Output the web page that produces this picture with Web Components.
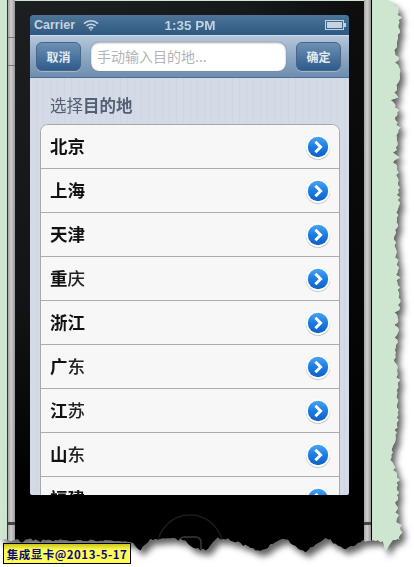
<!DOCTYPE html>
<html lang="zh"><head><meta charset="utf-8"><title>选择目的地</title>
<style>
html,body{margin:0;padding:0;background:#fff;width:414px;height:567px;overflow:hidden}
body{font-family:"Liberation Sans","Noto Sans CJK SC",sans-serif}
</style></head><body>
<torn-sheet>
  <phone-body>
    <ios-screen>
      <status-bar></status-bar>
      <search-bar>
        <nav-button>取消</nav-button>
        <text-box>手动输入目的地...</text-box>
        <nav-button>确定</nav-button>
      </search-bar>
      <grouped-list>
        <span slot="title">选择<b>目的地</b></span>
        <city-row><b>北京</b></city-row>
        <city-row><b>上海</b></city-row>
        <city-row><b>天津</b></city-row>
        <city-row><b>重</b><i>庆</i></city-row>
        <city-row><b>浙江</b></city-row>
        <city-row><b>广</b><i>东</i></city-row>
        <city-row><b>江</b><i>苏</i></city-row>
        <city-row><b>山</b><i>东</i></city-row>
        <city-row><b>福建</b></city-row>
      </grouped-list>
    </ios-screen>
  </phone-body>
</torn-sheet>
<stamp-label>集成显卡@2013-5-17</stamp-label>
<script>
function def(name,html){
  customElements.define(name,class extends HTMLElement{
    constructor(){super();this.attachShadow({mode:'open'}).innerHTML=html;}
  });
}
def('torn-sheet',`<style>
:host{display:block;width:414px;height:567px;filter:drop-shadow(4px 5px 3px rgba(60,60,60,.8))}
.page{display:flex;width:414px;height:567px;background:#cee6cf;overflow:hidden}
.green{width:7px;background:#cee6cf}
.line{width:1px;background:#2b3a2e}
.rail{width:7px;background:linear-gradient(90deg,#a5a5a5,#cfcfcf 45%,#989898);position:relative}
.rail i{position:absolute;left:0;right:0;height:3px;background:#444}
.rest{flex:1;background:#cee6cf}
</style><div class="page" id="p"><div class="green"></div><div class="line"></div>
<div class="rail"><i style="top:37px;height:1px;background:#777"></i><i style="top:65px;height:1px;background:#777"></i><i style="top:522px"></i></div>
<slot></slot>
<div class="rail"><i style="top:522px"></i></div><div class="line" style="background:#000"></div><div class="rest"></div></div>`);
def('phone-body',`<style>
:host{display:block;box-sizing:border-box;width:349px;height:567px;margin-top:1px;padding:14px 15px 0;
background:#000;position:relative}
:host::before{content:"";position:absolute;left:0;top:0;height:490px;width:15px;background:linear-gradient(180deg,#1d1e20,#131415 300px,#000)}
:host::after{content:"";position:absolute;right:0;top:0;height:490px;width:15px;background:linear-gradient(180deg,#0e0e0f,#060606 300px,#000)}
.band{position:absolute;left:15px;right:15px;top:0;height:14px;background:linear-gradient(90deg,#1d1e20,#17181a 70%,#0e0e0f)}
svg{position:absolute;left:100px;top:505px;z-index:1}
</style><div class="band"></div><slot></slot><svg width="150" height="70" viewBox="0 0 150 70" fill="none">
<circle cx="75" cy="42" r="33" stroke="#1c1c1c" stroke-width="1.5"/>
<rect x="64" y="31" width="22" height="22" rx="5" stroke="#3a3a3a" stroke-width="1.5"/></svg>`);
def('ios-screen',`<style>
:host{display:flex;flex-direction:column;width:319px;height:480px;overflow:hidden;border-radius:3px 3px 2px 2px;position:relative;z-index:2;filter:blur(.35px)}
</style><slot></slot>`);
def('status-bar',`<style>
:host{display:flex;align-items:center;box-sizing:border-box;height:20px;padding:0 3px 0 4px;color:#c5d3df;font:bold 12.5px "Liberation Sans",sans-serif;
background:linear-gradient(180deg,#4d7598,#2e5880)}
.l{flex:1;display:flex;align-items:center;gap:8px}
.m{font-size:13.5px}
.r{flex:1;display:flex;justify-content:flex-end}
</style><div class="l"><span>Carrier</span>
<svg width="16" height="12" viewBox="0 0 16 12" fill="none" stroke="#c5d3df" stroke-width="1.6"><path d="M1 4.6C5 .8 11 .8 15 4.6M3.4 7C6 4.6 10 4.6 12.6 7M5.8 9.3C7 8.2 9 8.2 10.2 9.3"/><circle cx="8" cy="10.8" r=".9" fill="#c5d3df" stroke="none"/></svg></div>
<span class="m">1:35 PM</span>
<div class="r"><svg width="21" height="10" viewBox="0 0 21 10"><rect x=".5" y=".5" width="18" height="9" fill="none" stroke="#c5d3df"/><rect x="2" y="2" width="15" height="6" fill="#c5d3df"/><rect x="19" y="3" width="2" height="4" fill="#c5d3df"/></svg></div>`);
def('search-bar',`<style>
:host{display:flex;align-items:center;gap:10px;box-sizing:border-box;height:43px;padding:0 8px 1px 6px;
background:linear-gradient(180deg,#b5c7db,#8fa8c3 50%,#6e8db0);border-top:1px solid #d0dbe6;border-bottom:1px solid #4d6f95}
</style><slot></slot>`);
def('nav-button',`<style>
:host{display:flex;align-items:center;justify-content:center;box-sizing:border-box;width:45px;height:29px;border-radius:6px;
border:1px solid #46658a;color:#e3eaf1;font:bold 12px "Noto Sans CJK SC",sans-serif;
background:linear-gradient(180deg,#6f90b2,#4d769f 50%,#2f5c8c);box-shadow:0 1px 0 rgba(255,255,255,.3)}
</style><slot></slot>`);
def('text-box',`<style>
:host{flex:1;display:flex;align-items:center;box-sizing:border-box;height:29px;padding-left:6px;border-radius:8px;background:#fff;
color:#b4b4b4;font:14px "Noto Sans CJK SC",sans-serif;box-shadow:inset 0 1px 2px rgba(0,0,0,.35),0 0 1px rgba(40,60,90,.6)}
</style><slot></slot>`);
def('grouped-list',`<style>
:host{display:block;flex:1;padding:0 9px 0 10px;min-height:0;
background:repeating-linear-gradient(90deg,#d4dbe6 0 6px,#ced6e1 6px 7px)}
.t{display:flex;align-items:center;box-sizing:border-box;height:46px;padding:7px 0 0 10px;color:#535f75;font:16.5px "Noto Sans CJK SC",sans-serif}
.g{border:1px solid #a9a9a9;border-radius:8px;background:#f7f7f7;overflow:hidden}
</style><div class="t"><slot name="title"></slot></div><div class="g"><slot></slot></div>`);
def('city-row',`<style>
:host{display:flex;align-items:center;box-sizing:border-box;height:44px;padding:0 8px 0 9px;border-bottom:1px solid #ababab;background:#f7f7f7;
color:#111;font:17.5px "Noto Sans CJK SC",sans-serif}
.n{flex:1;margin-top:-3px}
::slotted(b){font-weight:700}
::slotted(i){font-style:normal;font-weight:500;color:#222}
</style><span class="n"><slot></slot></span>
<svg width="26" height="26" viewBox="0 0 26 26"><defs><linearGradient id="g" x1="0" y1="0" x2="0" y2="1"><stop offset="0" stop-color="#45a4f2"/><stop offset=".5" stop-color="#1c7ce2"/><stop offset="1" stop-color="#0d5fca"/></linearGradient></defs>
<circle cx="13" cy="13.6" r="12.2" fill="#8f8f8f" opacity=".6"/><circle cx="13" cy="13" r="12" fill="#fff"/><circle cx="13" cy="13" r="10.2" fill="url(#g)"/>
<path d="M10.4 7.8 15.6 13l-5.2 5.2" fill="none" stroke="#fff" stroke-width="3"/></svg>`);
def('stamp-label',`<style>
:host{position:absolute;left:3px;top:543px;box-sizing:border-box;width:128px;height:21px;border:1px solid #000;display:flex;align-items:center;justify-content:center;white-space:nowrap;
background:linear-gradient(180deg,#c8c21a 0,#ffff55 6px,#ffff55);color:#0a0a80;font:bold 11.5px "Noto Sans CJK SC","Liberation Mono",monospace;letter-spacing:.5px}
</style><slot></slot>`);
/* torn outline */
(function(){
  let seed=17;const rnd=()=>{seed=(seed*16807)%2147483647;return seed/2147483647;};
  const lerp=(a,t)=>{for(let i=1;i<a.length;i++){if(t<=a[i][0]){const[p,q]=[a[i-1],a[i]];return q[1]===p[1]?p[1]:p[1]+(q[1]-p[1])*(t-p[0])/(q[0]-p[0]);}}return a[a.length-1][1];};
  const right=[[0,389],[8,398],[30,400],[50,395],[70,401],[100,394],[130,398],[160,396],[200,400],[240,395],[300,399],[360,396],[420,398],[460,391],[475,396],[495,398],[515,396],[530,400],[540,398]];
  const bottom=[[0,540],[130,541],[140,550],[152,538],[182,539],[195,549],[207,550],[217,538],[240,543],[260,552],[283,538],[304,553],[325,538],[345,550],[362,541],[384,541],[385,552],[392,540],[398,540]];
  const pts=[];
  for(let y=0;y<=540;y+=2.5){pts.push([lerp(right,y)+(rnd()-.5)*(rnd()<.2?8:3),y]);}
  for(let x=398;x>=0;x-=2.5){pts.push([x,lerp(bottom,x)+(rnd()-.5)*(rnd()<.15?5:2)]);}
  const poly='polygon(0 0,'+pts.map(p=>p[0].toFixed(1)+'px '+p[1].toFixed(1)+'px').join(',')+')';
  document.querySelector('torn-sheet').shadowRoot.getElementById('p').style.clipPath=poly;
})();
</script>
</body></html>
